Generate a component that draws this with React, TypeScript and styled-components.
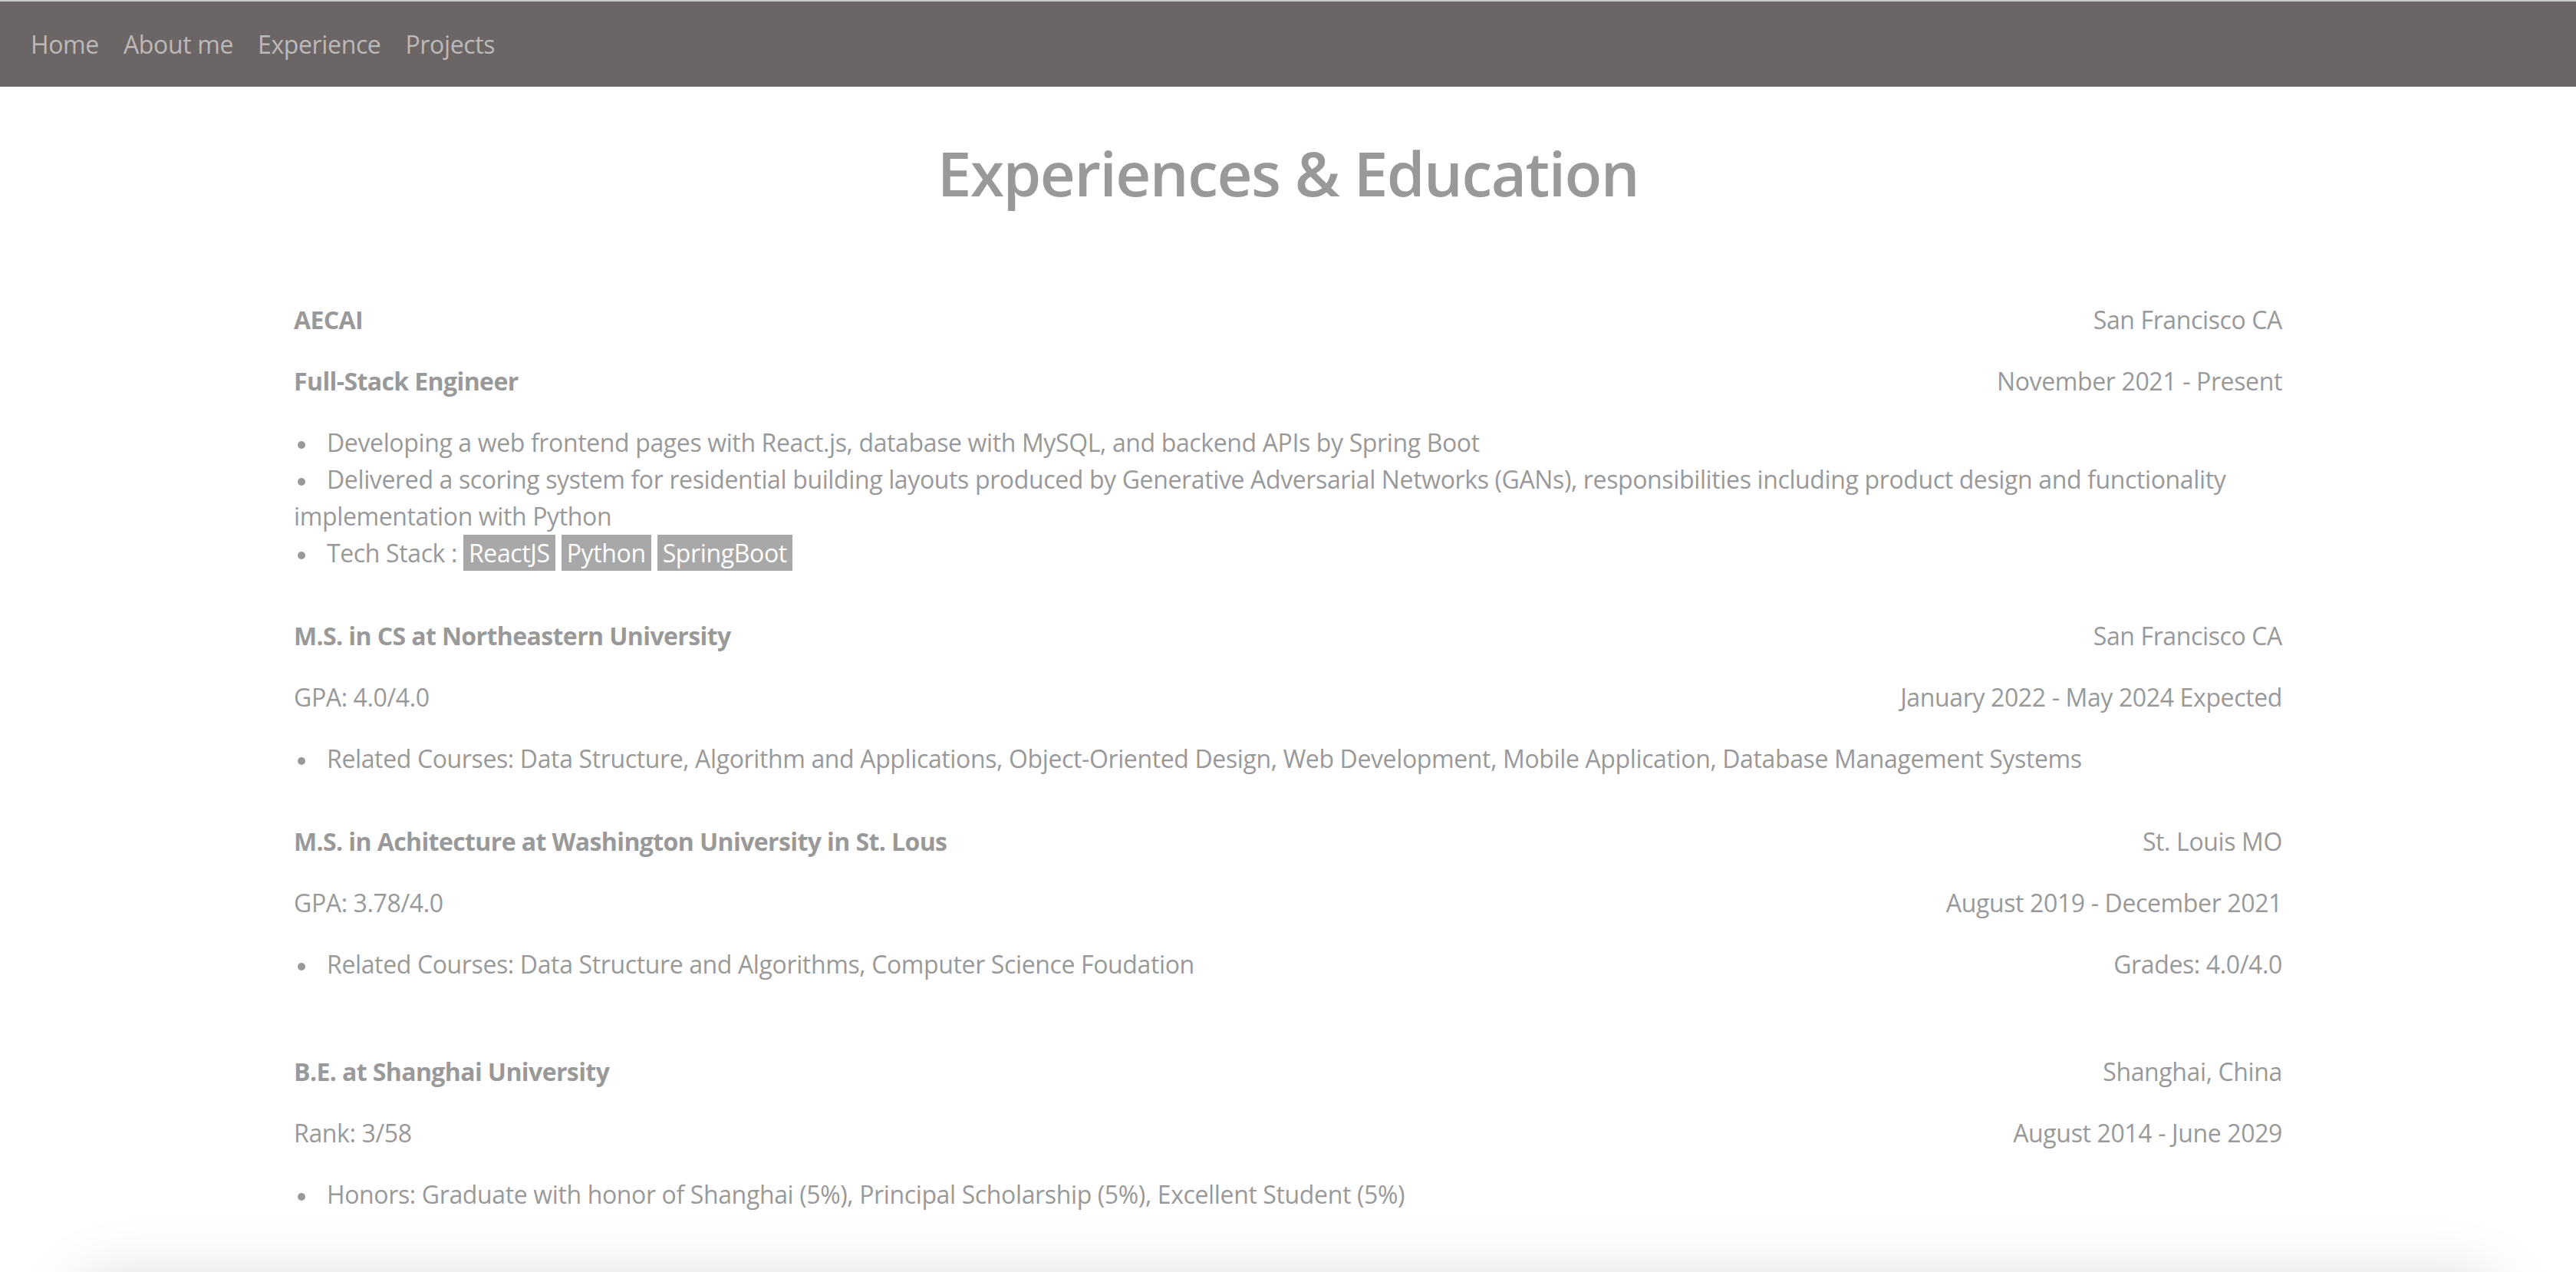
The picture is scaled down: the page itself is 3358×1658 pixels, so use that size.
import React from "react";
import styled, { createGlobalStyle } from "styled-components";

const GlobalStyle = createGlobalStyle`
  html, body {
    margin: 0;
    padding: 0;
    background: #ffffff;
  }
  body {
    font-family: "Open Sans", "Noto Sans", sans-serif;
    font-size: 32px;
    line-height: 48px;
    letter-spacing: -0.37px;
    color: #999999;
  }
  * {
    box-sizing: border-box;
  }
`;

const NavBar = styled.nav`
  display: flex;
  align-items: center;
  height: 113px;
  padding: 0 24px;
  background-color: #6b6565;
  border-top: 2px solid #c9c6c6;
`;

const NavLink = styled.a`
  padding: 16px;
  color: #bcb9b9;
  text-decoration: none;
  cursor: pointer;
`;

const Title = styled.h1`
  margin: 64px 0 120px;
  text-align: center;
  font-size: 80px;
  line-height: 96px;
  font-weight: 600;
  letter-spacing: -1.5px;
  color: #999999;
`;

const Container = styled.div`
  max-width: 2640px;
  margin: 0 auto;
  padding: 0 24px;
`;

const Section = styled.section`
  padding-bottom: 28px;
`;

const Row = styled.div`
  display: flex;
  justify-content: space-between;
  align-items: flex-start;
  margin-bottom: 32px;
`;

const Heading = styled.span`
  font-weight: 700;
  letter-spacing: -0.6px;
`;

const Side = styled.span`
  text-align: right;
  white-space: nowrap;
`;

const List = styled.ul`
  margin: 0 0 32px;
  padding: 0;
  list-style: none;
`;

const Item = styled.li`
  &::before {
    content: "";
    display: inline-block;
    width: 10px;
    height: 10px;
    margin: 0 28px 0 5px;
    border-radius: 50%;
    background-color: #999999;
    vertical-align: middle;
  }
`;

const Badge = styled.span`
  display: inline-block;
  padding: 0 7px;
  line-height: 47px;
  vertical-align: top;
  background-color: #a8a8a8;
  color: #ffffff;
`;

const NextCard = styled.div`
  height: 600px;
  margin: 32px 110px 0;
  background: #ffffff;
  box-shadow: 0 0 80px rgba(0, 0, 0, 0.18);
`;

type Entry = {
  title: string;
  place: string;
  sub: string;
  subBold?: boolean;
  date: string;
  bullets: React.ReactNode[];
  aside?: string;
};

const entries: Entry[] = [
  {
    title: "AECAI",
    place: "San Francisco CA",
    sub: "Full-Stack Engineer",
    subBold: true,
    date: "November 2021 - Present",
    bullets: [
      "Developing a web frontend pages with React.js, database with MySQL, and backend APIs by Spring Boot",
      "Delivered a scoring system for residential building layouts produced by Generative Adversarial Networks (GANs), responsibilities including product design and functionality implementation with Python",
      <>
        Tech Stack : <Badge>ReactJS</Badge> <Badge>Python</Badge>{" "}
        <Badge>SpringBoot</Badge>
      </>,
    ],
  },
  {
    title: "M.S. in CS at Northeastern University",
    place: "San Francisco CA",
    sub: "GPA: 4.0/4.0",
    date: "January 2022 - May 2024 Expected",
    bullets: [
      "Related Courses: Data Structure, Algorithm and Applications, Object-Oriented Design, Web Development, Mobile Application, Database Management Systems",
    ],
  },
  {
    title: "M.S. in Achitecture at Washington University in St. Lous",
    place: "St. Louis MO",
    sub: "GPA: 3.78/4.0",
    date: "August 2019 - December 2021",
    bullets: [
      "Related Courses: Data Structure and Algorithms, Computer Science Foudation",
    ],
    aside: "Grades: 4.0/4.0",
  },
  {
    title: "B.E. at Shanghai University",
    place: "Shanghai, China",
    sub: "Rank: 3/58",
    date: "August 2014 - June 2029",
    bullets: [
      "Honors: Graduate with honor of Shanghai (5%), Principal Scholarship (5%), Excellent Student (5%)",
    ],
  },
];

const App: React.FC = () => {
  return (
    <>
      <GlobalStyle />
      <NavBar>
        <NavLink>Home</NavLink>
        <NavLink>About me</NavLink>
        <NavLink>Experience</NavLink>
        <NavLink>Projects</NavLink>
      </NavBar>
      <Title>Experiences &amp; Education</Title>
      <Container>
        {entries.map((e) => {
          const list = (
            <List>
              {e.bullets.map((b, i) => (
                <Item key={i}>{b}</Item>
              ))}
            </List>
          );
          return (
            <Section key={e.title}>
              <Row>
                <Heading>{e.title}</Heading>
                <Side>{e.place}</Side>
              </Row>
              <Row>
                {e.subBold ? <Heading>{e.sub}</Heading> : <span>{e.sub}</span>}
                <Side>{e.date}</Side>
              </Row>
              {e.aside ? (
                <Row>
                  {list}
                  <Side>{e.aside}</Side>
                </Row>
              ) : (
                list
              )}
            </Section>
          );
        })}
      </Container>
      <NextCard />
    </>
  );
};

export default App;
